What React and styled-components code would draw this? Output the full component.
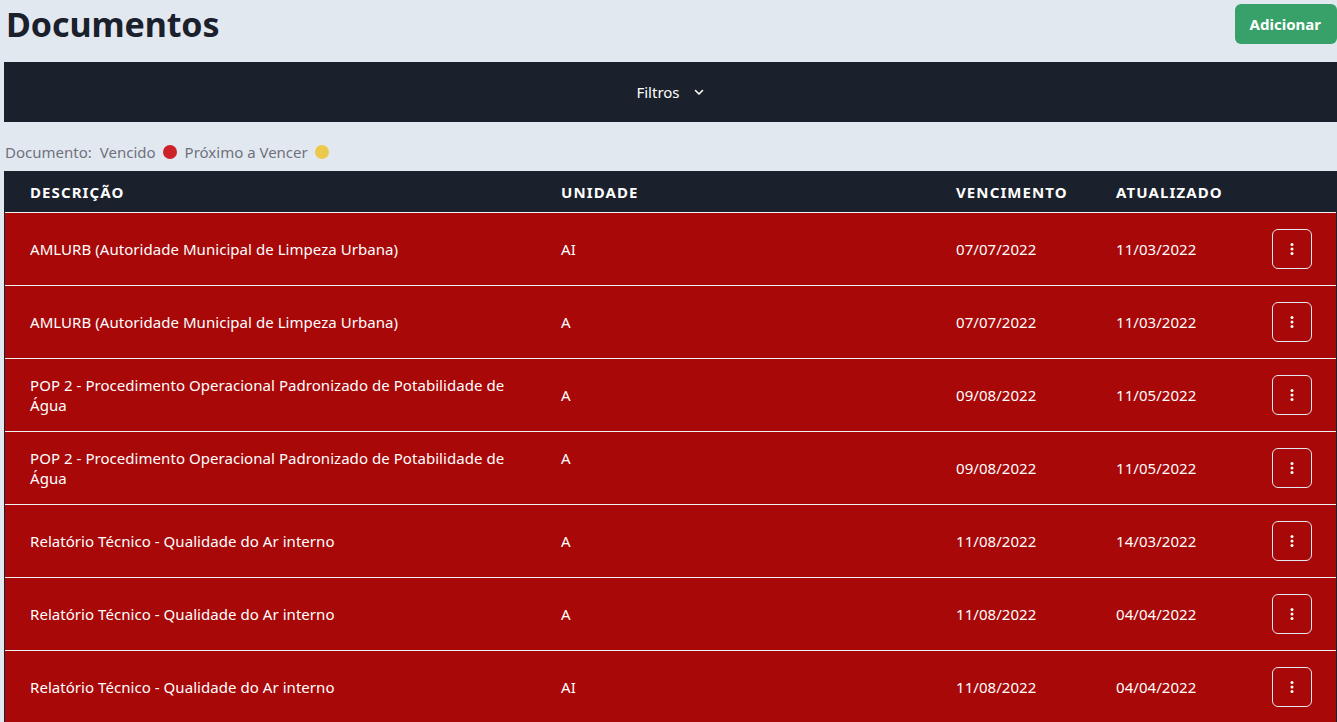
import React from "react";
import styled, { createGlobalStyle } from "styled-components";

const Global = createGlobalStyle`
  html, body { margin: 0; padding: 0; }
  body {
    background: #e2e8f0;
    font-family: "Noto Sans", "Open Sans", sans-serif;
    color: #1a202c;
    overflow: hidden;
  }
`;

const Page = styled.div`
  padding: 4px 0 0 4px;
  width: 1333px;
`;

const Header = styled.header`
  display: flex;
  align-items: center;
  justify-content: space-between;
  height: 40px;
`;

const Title = styled.h1`
  margin: 0 0 0 2px;
  font-size: 34px;
  font-weight: 700;
  line-height: 40px;
  color: #1a202c;
  letter-spacing: -0.1px;
`;

const AddButton = styled.button`
  height: 40px;
  padding: 0 16px 0 15px;
  border: none;
  border-radius: 6px;
  background: #38a169;
  color: #fff;
  font-family: inherit;
  font-size: 15px;
  font-weight: 700;
  cursor: pointer;
`;

const FilterBar = styled.div`
  margin-top: 18px;
  height: 60px;
  background: #1a202c;
  display: flex;
  align-items: center;
  justify-content: center;
  gap: 13px;
  color: #fff;
  font-size: 15px;
`;

const Legend = styled.div`
  display: flex;
  align-items: center;
  height: 22px;
  padding-top: 19px;
  margin-bottom: 8px;
  margin-left: 1px;
  color: #6f717c;
  font-size: 15px;
  gap: 8px;
`;

const LegendItem = styled.span`
  display: inline-flex;
  align-items: center;
  gap: 7px;
`;

const Dot = styled.span`
  width: 14px;
  height: 14px;
  border-radius: 50%;
  background: ${(p) => p.$color};
  display: inline-block;
`;

const Table = styled.div`
  border-left: 1px solid #1a202c;
  border-right: 1px solid #1a202c;
`;

const Row = styled.div`
  display: grid;
  grid-template-columns: 530px 395px 160px 156px 1fr;
  height: ${(p) => (p.$head ? "41px" : "72px")};
  background: ${(p) => (p.$head ? "#1a202c" : "#a80808")};
  border-bottom: 1px solid #f1f1f1;
  color: #fff;
  & > div:first-child {
    padding-left: 25px;
  }
`;

const HeadCell = styled.div`
  display: flex;
  align-items: center;
  padding: 0 26px;
  font-size: 15px;
  font-weight: 700;
  letter-spacing: 1.1px;
  text-transform: uppercase;
`;

const Cell = styled.div`
  display: flex;
  align-items: ${(p) => (p.$top ? "flex-start" : "center")};
  padding: ${(p) => (p.$top ? "16px 26px 0" : "0 26px")};
  font-size: 15px;
  line-height: 20px;
  letter-spacing: 0.05px;
`;

const MenuButton = styled.button`
  width: 40px;
  height: 40px;
  border: 1px solid #e2e8f0;
  border-radius: 6px;
  background: transparent;
  display: flex;
  align-items: center;
  justify-content: center;
  padding: 0;
  cursor: pointer;
`;

const Chevron = () => (
  <svg width="12" height="12" viewBox="0 0 12 12" fill="none">
    <path d="M2.5 4.5 L6 8 L9.5 4.5" stroke="#fff" strokeWidth="1.6" strokeLinecap="round" strokeLinejoin="round" />
  </svg>
);

const Dots = () => (
  <svg width="4" height="14" viewBox="0 0 4 14">
    <circle cx="2" cy="2.5" r="1.5" fill="#fff" />
    <circle cx="2" cy="7" r="1.5" fill="#fff" />
    <circle cx="2" cy="11.5" r="1.5" fill="#fff" />
  </svg>
);

const rows = [
  { d: "AMLURB (Autoridade Municipal de Limpeza Urbana)", u: "AI", v: "07/07/2022", a: "11/03/2022" },
  { d: "AMLURB (Autoridade Municipal de Limpeza Urbana)", u: "A", v: "07/07/2022", a: "11/03/2022" },
  { d: "POP 2 - Procedimento Operacional Padronizado de Potabilidade de Água", u: "A", v: "09/08/2022", a: "11/05/2022" },
  { d: "POP 2 - Procedimento Operacional Padronizado de Potabilidade de Água", u: "A", v: "09/08/2022", a: "11/05/2022", top: true },
  { d: "Relatório Técnico - Qualidade do Ar interno", u: "A", v: "11/08/2022", a: "14/03/2022" },
  { d: "Relatório Técnico - Qualidade do Ar interno", u: "A", v: "11/08/2022", a: "04/04/2022" },
  { d: "Relatório Técnico - Qualidade do Ar interno", u: "AI", v: "11/08/2022", a: "04/04/2022" },
];

export default function App() {
  return (
    <>
      <Global />
      <Page>
        <Header>
          <Title>Documentos</Title>
          <AddButton>Adicionar</AddButton>
        </Header>
        <FilterBar>
          <span>Filtros</span>
          <Chevron />
        </FilterBar>
        <Legend>
          <span>Documento:</span>
          <LegendItem>
            Vencido <Dot $color="#cc2127" />
          </LegendItem>
          <LegendItem>
            Próximo a Vencer <Dot $color="#ecc94b" />
          </LegendItem>
        </Legend>
        <Table>
          <Row $head>
            <HeadCell>Descrição</HeadCell>
            <HeadCell>Unidade</HeadCell>
            <HeadCell>Vencimento</HeadCell>
            <HeadCell>Atualizado</HeadCell>
            <HeadCell />
          </Row>
          {rows.map((r, i) => (
            <Row key={i}>
              <Cell>{r.d}</Cell>
              <Cell $top={r.top}>{r.u}</Cell>
              <Cell>{r.v}</Cell>
              <Cell>{r.a}</Cell>
              <Cell>
                <MenuButton aria-label="Opções">
                  <Dots />
                </MenuButton>
              </Cell>
            </Row>
          ))}
        </Table>
      </Page>
    </>
  );
}
